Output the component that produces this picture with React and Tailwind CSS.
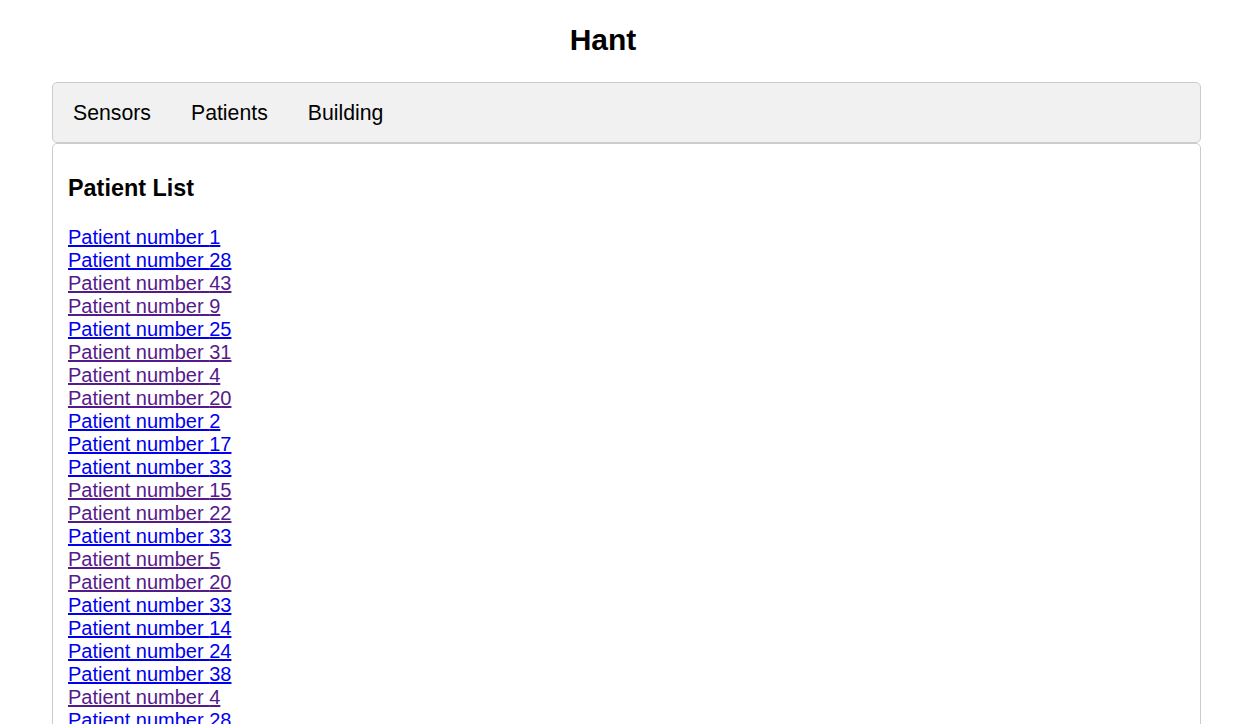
import React from "react";

const patients = [
  [1, false], [28, false], [43, true], [9, true], [25, false], [31, true],
  [4, true], [20, true], [2, false], [17, false], [33, false], [15, true],
  [22, true], [33, false], [5, true], [20, true], [33, false], [14, false],
  [24, false], [38, false], [4, true], [28, false], [9, true], [17, false],
];

export default function App() {
  return (
    <div className="min-h-screen bg-white text-black" style={{ fontFamily: '"Liberation Sans", Arial, sans-serif' }}>
      <h2 className="pt-[23px] mb-[25px] pr-[49px] text-center text-[30px] leading-[34px] font-bold">Hant</h2>
      <div className="ml-[52px] w-[1149px]">
        <div className="flex border border-[#cccccc] bg-[#f1f1f1] rounded-[5px]">
          {["Sensors", "Patients", "Building"].map((t) => (
            <button key={t} className="px-[20px] py-[17.5px] text-[21.25px] leading-[24px] bg-transparent">
              {t}
            </button>
          ))}
        </div>
        <div className="border border-[#cccccc] rounded-t-[5px] px-[15px] pt-[7.5px] pb-[8px] min-h-[600px]">
          <h3 className="mt-[23px] mb-[24px] text-[23.4px] leading-[27px] font-bold">Patient List</h3>
          <div className="flex flex-col items-start">
            {patients.map(([n, visited], i) => (
              <a
                key={i}
                href="#"
                className={`text-[20px] leading-[23px] underline ${visited ? "text-[#551a8b]" : "text-[#0000ee]"}`}
              >
                Patient number {n}
              </a>
            ))}
          </div>
        </div>
      </div>
    </div>
  );
}
